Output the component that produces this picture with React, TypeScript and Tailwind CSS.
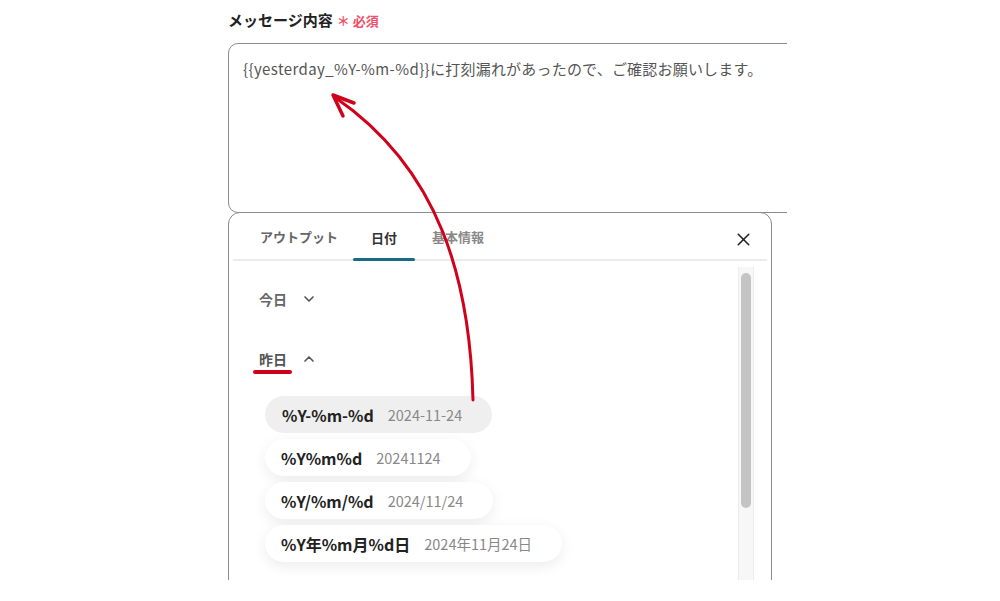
import { X, ChevronDown, ChevronUp } from 'lucide-react'

const FONT = { fontFamily: '"Noto Sans CJK JP", "Noto Sans", sans-serif' }

const FORMATS = [
  { fmt: '%Y-%m-%d', sample: '2024-11-24', hover: true },
  { fmt: '%Y%m%d', sample: '20241124' },
  { fmt: '%Y/%m/%d', sample: '2024/11/24' },
  { fmt: '%Y年%m月%d日', sample: '2024年11月24日' },
]

export default function App() {
  return (
    <div className="w-[1000px] h-[601px] bg-white pl-[228px]" style={FONT}>
      <div className="relative w-[559px] h-[580px] overflow-hidden">
        {/* ── LABEL ─────────────────────────── */}
        <div className="flex items-center h-[43px] pb-[2px]">
          <span className="text-[15px] font-bold text-[#222]">メッセージ内容</span>
          <span className="ml-[4px] text-[13px] font-bold text-[#f0506a]">＊ 必須</span>
        </div>

        {/* ── TEXTAREA ──────────────────────── */}
        <div className="w-[620px] h-[170px] rounded-[10px] border border-[#8c8c8c] pl-[14px] pt-[14px]">
          <p className="text-[15px] text-[#555] whitespace-nowrap">
            <span className="tracking-[0.4px]">{'{{yesterday_%Y-%m-%d}}'}</span>
            <span className="tracking-[0.2px]">に打刻漏れがあったので、ご確認お願いします。</span>
          </p>
        </div>

        {/* ── PANEL ─────────────────────────── */}
        <div className="w-[544px] h-[420px] rounded-t-[12px] border border-[#8c8c8c] bg-white -mt-[1px]">
          <div className="mx-[4px] h-[48px] border-b-2 border-[#ececec] flex items-end relative">
            <div className="flex items-end h-full pl-[27px]">
              <div className="h-full flex items-center pt-[2px] text-[13px] font-bold text-[#666] mr-[15px]">
                アウトプット
              </div>
              <div className="h-full flex flex-col items-center w-[62px]">
                <div className="flex-1 flex items-center pt-[5px] text-[13px] font-bold text-[#333]">日付</div>
                <div className="h-[3px] w-full rounded-full bg-[#1b6a85] -mb-[2px]" />
              </div>
              <div className="h-full flex items-center pt-[2px] text-[13px] font-bold text-[#888] ml-[17px]">
                基本情報
              </div>
            </div>
            <X className="absolute right-[13px] top-[16px] w-[21px] h-[21px] text-[#222]" strokeWidth={1.8} />
          </div>

          <div className="flex">
            <div className="flex-1 pl-[30px]">
              <div className="flex items-center h-[20px] mt-[28px]">
                <span className="text-[14px] font-bold text-[#666]">今日</span>
                <ChevronDown className="ml-[14px] w-[16px] h-[16px] text-[#555]" strokeWidth={2.5} />
              </div>
              <div className="flex items-center h-[20px] mt-[40px]">
                <span className="relative text-[14px] font-bold text-[#555]">
                  昨日
                  <span className="absolute left-[-6px] right-[-5px] top-[21px] h-[4px] rounded-full bg-[#d0021b]" />
                </span>
                <ChevronUp className="ml-[14px] w-[16px] h-[16px] text-[#555]" strokeWidth={2.5} />
              </div>
              <div className="flex flex-col items-start gap-[6px] mt-[27px] ml-[6px]">
                {FORMATS.map((f) => (
                  <div
                    key={f.fmt}
                    className={
                      f.hover
                        ? 'h-[37px] flex items-center rounded-full bg-[#efefef] pl-[17px] pr-[30px]'
                        : 'h-[37px] flex items-center rounded-full bg-white pl-[16px] pr-[30px] shadow-[0_4px_14px_rgba(0,0,0,0.08)]'
                    }
                  >
                    <span className="text-[16px] font-bold text-[#222]">{f.fmt}</span>
                    <span className="ml-[14px] text-[14.5px] text-[#888]">{f.sample}</span>
                  </div>
                ))}
              </div>
            </div>
            <div className="mr-[17px] mt-[6px] w-[16px] h-[330px] bg-[#f7f7f7] border-x border-[#ececec] flex justify-center pt-[6px]">
              <div className="w-[10px] h-[235px] rounded-full bg-[#c4c4c4]" />
            </div>
          </div>
        </div>

        {/* ── ANNOTATION ARROW ──────────────── */}
        <svg className="absolute left-[-228px] top-0 pointer-events-none" width="1000" height="601" viewBox="0 0 1000 601">
          <path d="M 473 400 C 470 280, 440 170, 336 98" fill="none" stroke="#d0021b" strokeWidth="3" strokeLinecap="round" />
          <path d="M 354 103 L 333 95 L 343 116" fill="none" stroke="#d0021b" strokeWidth="3.5" strokeLinecap="round" strokeLinejoin="round" />
        </svg>
      </div>
    </div>
  )
}
